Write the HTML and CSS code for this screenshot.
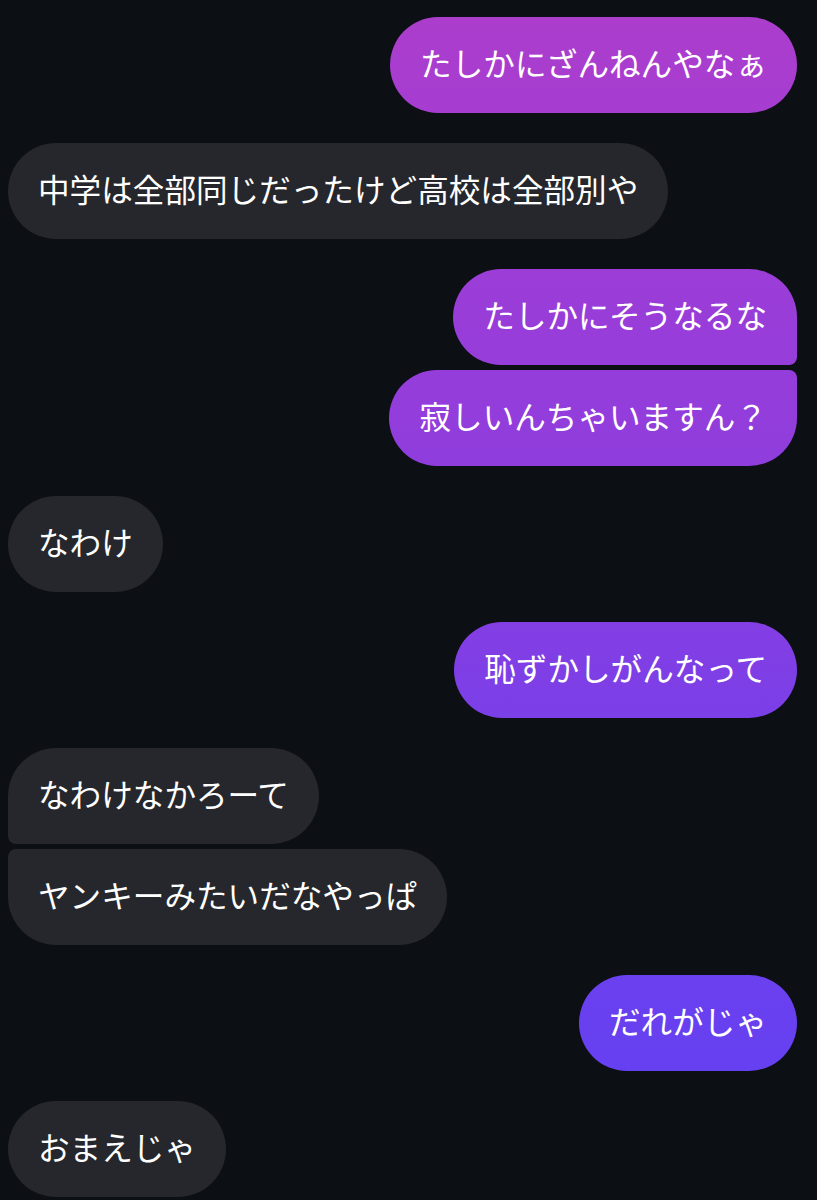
FILE: index.html
```html
<!DOCTYPE html>
<html lang="ja">
<head>
    <meta charset="UTF-8">
    <title>Chat</title>
    <link rel="stylesheet" href="styles.css">
</head>
<body>

<div class="chat">
    <div class="group sent">
        <div class="bubble">たしかにざんねんやなぁ</div>
    </div>

    <div class="group received">
        <div class="bubble">中学は全部同じだったけど高校は全部別や</div>
    </div>

    <div class="group sent">
        <div class="bubble">たしかにそうなるな</div>
        <div class="bubble">寂しいんちゃいますん？</div>
    </div>

    <div class="group received">
        <div class="bubble">なわけ</div>
    </div>

    <div class="group sent">
        <div class="bubble">恥ずかしがんなって</div>
    </div>

    <div class="group received">
        <div class="bubble">なわけなかろーて</div>
        <div class="bubble">ヤンキーみたいだなやっぱ</div>
    </div>

    <div class="group sent">
        <div class="bubble">だれがじゃ</div>
    </div>

    <div class="group received">
        <div class="bubble">おまえじゃ</div>
    </div>
</div>

</body>
</html>
```

FILE: styles.css
```css
html, body {
    margin: 0;
    background-color: #0c0f14;
}

body {
    font-family: "Noto Sans CJK JP", "Noto Sans", sans-serif;
    color: white;
    height: 1200px;
    overflow: hidden;
}

.chat {
    display: flex;
    flex-direction: column;
    gap: 30px;
    padding: 17px 20px 0 8px;
}

.group {
    display: flex;
    flex-direction: column;
    gap: 5px;
}

.sent {
    align-items: flex-end;
}

.received {
    align-items: flex-start;
}

.bubble {
    box-sizing: border-box;
    height: 96px;
    padding: 0 30px 5px;
    border-radius: 48px;
    font-size: 31.6px;
    line-height: 91px;
    white-space: nowrap;
}

.sent .bubble {
    background: linear-gradient(180deg, #ad3dcc 0%, #9a3dd8 25%, #8a3de0 45%, #7640ea 65%, #5e40f4 100%);
    background-attachment: fixed;
}

.received .bubble {
    background-color: #25272c;
}

/* grouped bubbles get a flat corner on the joined side */
.sent .bubble:not(:last-child) {
    border-bottom-right-radius: 8px;
}

.sent .bubble:not(:first-child) {
    border-top-right-radius: 8px;
}

.received .bubble:not(:last-child) {
    border-bottom-left-radius: 8px;
}

.received .bubble:not(:first-child) {
    border-top-left-radius: 8px;
}
```
